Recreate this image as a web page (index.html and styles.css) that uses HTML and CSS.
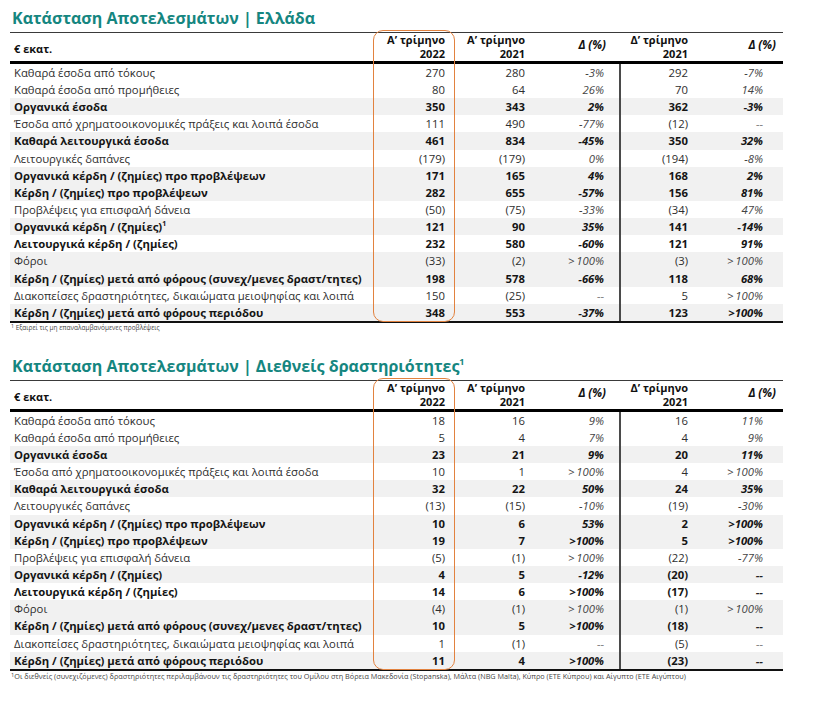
FILE: index.html
```html
<!DOCTYPE html>
<html lang="el">
<head>
<meta charset="utf-8">
<title>Κατάσταση Αποτελεσμάτων</title>
<link rel="stylesheet" href="styles.css">
</head>
<body>
<section class="block">
  <h2 class="title">Κατάσταση Αποτελεσμάτων | Ελλάδα</h2>
  <div class="table-wrap">
    <table class="fin">
      <colgroup><col class="c-label"><col class="c-a"><col class="c-b"><col class="c-c"><col class="c-d"><col class="c-e"></colgroup>
      <thead>
        <tr>
          <th class="lbl">€ εκατ.</th>
          <th class="n a">Α’ τρίμηνο<br>2022</th>
          <th class="n b">Α’ τρίμηνο<br>2021</th>
          <th class="n c pct">Δ (%)</th>
          <th class="n d">Δ’ τρίμηνο<br>2021</th>
          <th class="n e pct">Δ (%)</th>
        </tr>
      </thead>
      <tbody>
        <tr><td class="lbl">Καθαρά έσοδα από τόκους</td><td class="n a">270</td><td class="n b">280</td><td class="n c p">-3%</td><td class="n d">292</td><td class="n e p">-7%</td></tr>
        <tr><td class="lbl">Καθαρά έσοδα από προμήθειες</td><td class="n a">80</td><td class="n b">64</td><td class="n c p">26%</td><td class="n d">70</td><td class="n e p">14%</td></tr>
        <tr class="bold sh"><td class="lbl">Οργανικά έσοδα</td><td class="n a">350</td><td class="n b">343</td><td class="n c p">2%</td><td class="n d">362</td><td class="n e p">-3%</td></tr>
        <tr><td class="lbl">Έσοδα από χρηματοοικονομικές πράξεις και λοιπά έσοδα</td><td class="n a">111</td><td class="n b">490</td><td class="n c p">-77%</td><td class="n d">(12)</td><td class="n e p dash">--</td></tr>
        <tr class="bold sh"><td class="lbl">Καθαρά λειτουργικά έσοδα</td><td class="n a">461</td><td class="n b">834</td><td class="n c p">-45%</td><td class="n d">350</td><td class="n e p">32%</td></tr>
        <tr><td class="lbl">Λειτουργικές δαπάνες</td><td class="n a">(179)</td><td class="n b">(179)</td><td class="n c p">0%</td><td class="n d">(194)</td><td class="n e p">-8%</td></tr>
        <tr class="bold sh"><td class="lbl">Οργανικά κέρδη / (ζημίες) προ προβλέψεων</td><td class="n a">171</td><td class="n b">165</td><td class="n c p">4%</td><td class="n d">168</td><td class="n e p">2%</td></tr>
        <tr class="bold sh"><td class="lbl">Κέρδη / (ζημίες) προ προβλέψεων</td><td class="n a">282</td><td class="n b">655</td><td class="n c p">-57%</td><td class="n d">156</td><td class="n e p">81%</td></tr>
        <tr><td class="lbl">Προβλέψεις για επισφαλή δάνεια</td><td class="n a">(50)</td><td class="n b">(75)</td><td class="n c p">-33%</td><td class="n d">(34)</td><td class="n e p">47%</td></tr>
        <tr class="bold sh"><td class="lbl">Οργανικά κέρδη / (ζημίες)<sup>1</sup></td><td class="n a">121</td><td class="n b">90</td><td class="n c p">35%</td><td class="n d">141</td><td class="n e p">-14%</td></tr>
        <tr class="bold"><td class="lbl">Λειτουργικά κέρδη / (ζημίες)</td><td class="n a">232</td><td class="n b">580</td><td class="n c p">-60%</td><td class="n d">121</td><td class="n e p">91%</td></tr>
        <tr class="sh"><td class="lbl">Φόροι</td><td class="n a">(33)</td><td class="n b">(2)</td><td class="n c p">&gt;&#8201;100%</td><td class="n d">(3)</td><td class="n e p">&gt;&#8201;100%</td></tr>
        <tr class="bold sh"><td class="lbl">Κέρδη / (ζημίες) μετά από φόρους (συνεχ/μενες δραστ/τητες)</td><td class="n a">198</td><td class="n b">578</td><td class="n c p">-66%</td><td class="n d">118</td><td class="n e p">68%</td></tr>
        <tr><td class="lbl">Διακοπείσες δραστηριότητες, δικαιώματα μειοψηφίας και λοιπά</td><td class="n a">150</td><td class="n b">(25)</td><td class="n c p dash">--</td><td class="n d">5</td><td class="n e p">&gt;&#8201;100%</td></tr>
        <tr class="bold sh last"><td class="lbl">Κέρδη / (ζημίες) μετά από φόρους περιόδου</td><td class="n a">348</td><td class="n b">553</td><td class="n c p">-37%</td><td class="n d">123</td><td class="n e p">&gt;100%</td></tr>
      </tbody>
    </table>
    <div class="hl"></div>
  </div>
  <p class="note note-s"><sup>1</sup> Εξαιρεί τις μη επαναλαμβανόμενες προβλέψεις</p>
</section>

<section class="block block-2">
  <h2 class="title">Κατάσταση Αποτελεσμάτων | Διεθνείς δραστηριότητες<sup>1</sup></h2>
  <div class="table-wrap">
    <table class="fin">
      <colgroup><col class="c-label"><col class="c-a"><col class="c-b"><col class="c-c"><col class="c-d"><col class="c-e"></colgroup>
      <thead>
        <tr>
          <th class="lbl">€ εκατ.</th>
          <th class="n a">Α’ τρίμηνο<br>2022</th>
          <th class="n b">Α’ τρίμηνο<br>2021</th>
          <th class="n c pct">Δ (%)</th>
          <th class="n d">Δ’ τρίμηνο<br>2021</th>
          <th class="n e pct">Δ (%)</th>
        </tr>
      </thead>
      <tbody>
        <tr><td class="lbl">Καθαρά έσοδα από τόκους</td><td class="n a">18</td><td class="n b">16</td><td class="n c p">9%</td><td class="n d">16</td><td class="n e p">11%</td></tr>
        <tr><td class="lbl">Καθαρά έσοδα από προμήθειες</td><td class="n a">5</td><td class="n b">4</td><td class="n c p">7%</td><td class="n d">4</td><td class="n e p">9%</td></tr>
        <tr class="bold sh"><td class="lbl">Οργανικά έσοδα</td><td class="n a">23</td><td class="n b">21</td><td class="n c p">9%</td><td class="n d">20</td><td class="n e p">11%</td></tr>
        <tr><td class="lbl">Έσοδα από χρηματοοικονομικές πράξεις και λοιπά έσοδα</td><td class="n a">10</td><td class="n b">1</td><td class="n c p">&gt;&#8201;100%</td><td class="n d">4</td><td class="n e p">&gt;&#8201;100%</td></tr>
        <tr class="bold sh"><td class="lbl">Καθαρά λειτουργικά έσοδα</td><td class="n a">32</td><td class="n b">22</td><td class="n c p">50%</td><td class="n d">24</td><td class="n e p">35%</td></tr>
        <tr><td class="lbl">Λειτουργικές δαπάνες</td><td class="n a">(13)</td><td class="n b">(15)</td><td class="n c p">-10%</td><td class="n d">(19)</td><td class="n e p">-30%</td></tr>
        <tr class="bold sh"><td class="lbl">Οργανικά κέρδη / (ζημίες) προ προβλέψεων</td><td class="n a">10</td><td class="n b">6</td><td class="n c p">53%</td><td class="n d">2</td><td class="n e p">&gt;100%</td></tr>
        <tr class="bold sh"><td class="lbl">Κέρδη / (ζημίες) προ προβλέψεων</td><td class="n a">19</td><td class="n b">7</td><td class="n c p">&gt;100%</td><td class="n d">5</td><td class="n e p">&gt;100%</td></tr>
        <tr><td class="lbl">Προβλέψεις για επισφαλή δάνεια</td><td class="n a">(5)</td><td class="n b">(1)</td><td class="n c p">&gt;&#8201;100%</td><td class="n d">(22)</td><td class="n e p">-77%</td></tr>
        <tr class="bold sh"><td class="lbl">Οργανικά κέρδη / (ζημίες)</td><td class="n a">4</td><td class="n b">5</td><td class="n c p">-12%</td><td class="n d">(20)</td><td class="n e p dash">--</td></tr>
        <tr class="bold"><td class="lbl">Λειτουργικά κέρδη / (ζημίες)</td><td class="n a">14</td><td class="n b">6</td><td class="n c p">&gt;100%</td><td class="n d">(17)</td><td class="n e p dash">--</td></tr>
        <tr class="sh"><td class="lbl">Φόροι</td><td class="n a">(4)</td><td class="n b">(1)</td><td class="n c p">&gt;&#8201;100%</td><td class="n d">(1)</td><td class="n e p">&gt;&#8201;100%</td></tr>
        <tr class="bold sh"><td class="lbl">Κέρδη / (ζημίες) μετά από φόρους (συνεχ/μενες δραστ/τητες)</td><td class="n a">10</td><td class="n b">5</td><td class="n c p">&gt;100%</td><td class="n d">(18)</td><td class="n e p dash">--</td></tr>
        <tr><td class="lbl">Διακοπείσες δραστηριότητες, δικαιώματα μειοψηφίας και λοιπά</td><td class="n a">1</td><td class="n b">(1)</td><td class="n c p dash">--</td><td class="n d">(5)</td><td class="n e p dash">--</td></tr>
        <tr class="bold sh last"><td class="lbl">Κέρδη / (ζημίες) μετά από φόρους περιόδου</td><td class="n a">11</td><td class="n b">4</td><td class="n c p">&gt;100%</td><td class="n d">(23)</td><td class="n e p dash">--</td></tr>
      </tbody>
    </table>
    <div class="hl"></div>
  </div>
  <p class="note note-l"><sup>1</sup>Οι διεθνείς (συνεχιζόμενες) δραστηριότητες περιλαμβάνουν τις δραστηριότητες του Ομίλου στη Βόρεια Μακεδονία (Stopanska), Μάλτα (NBG Malta), Κύπρο (ΕΤΕ Κύπρου) και Αίγυπτο (ΕΤΕ Αιγύπτου)</p>
</section>
</body>
</html>
```

FILE: styles.css
```css
* { box-sizing: border-box; }

html, body {
  margin: 0;
  padding: 0;
  background: #ffffff;
}

body {
  font-family: "Open Sans", "Noto Sans", "DejaVu Sans", sans-serif;
  color: #222;
  padding-top: 8px;
}

.block {
  padding-left: 10px;
}

.block-2 {
  margin-top: 24px;
}

.title {
  margin: 0 0 4px 2px;
  font-size: 16px;
  line-height: 20px;
  font-weight: 700;
  color: #158680;
  white-space: nowrap;
}

.title sup {
  font-size: 9px;
  line-height: 0;
  vertical-align: 7px;
}

.table-wrap {
  position: relative;
  width: 773px;
}

.fin {
  width: 773px;
  table-layout: fixed;
  border-collapse: collapse;
  border-top: 1px solid #3a3a3a;
  font-size: 11.3px;
}

.c-label { width: 363px; }
.c-a { width: 82px; }
.c-b { width: 80px; }
.c-c { width: 85px; }
.c-d { width: 78px; }
.c-e { width: 85px; }

.fin th {
  height: 29px;
  padding: 0;
  font-weight: 700;
  color: #111;
  line-height: 14px;
  vertical-align: top;
  border-bottom: 3px solid #000;
  white-space: nowrap;
  font-size: 11px;
}

.fin th.lbl {
  text-align: left;
  padding-left: 4px;
  padding-top: 9px;
}

.fin th.pct {
  font-style: italic;
  font-size: 11.5px;
  padding-top: 5px;
}

.fin td {
  height: 17.15px;
  padding: 0;
  line-height: 17px;
  white-space: nowrap;
  color: #2e2e2e;
}

.fin td.lbl {
  padding-left: 4px;
  text-align: left;
}

.fin .n { text-align: right; }
.fin .a { padding-right: 10px; }
.fin .b { padding-right: 10px; }
.fin .c { padding-right: 15px; }
.fin .d { padding-right: 10px; }
.fin .e { padding-right: 20px; }
.fin th.e { padding-right: 7px; }
.fin th.c { padding-right: 14px; }

.fin td.d {
  border-left: 2px solid #4a4a4a;
}

.fin td.p {
  font-style: italic;
  color: #444;
}

.fin td.dash {
  color: #888;
}

.fin tr.bold td {
  font-weight: 700;
  color: #151515;
}

.fin tr.bold td.dash {
  color: #222;
}

.fin tr.sh td {
  background: #f1f1f1;
}

.fin tr.last td {
  border-bottom: 2px solid #111;
}

.fin sup {
  font-size: 7px;
  line-height: 0;
  vertical-align: 5px;
}

.hl {
  position: absolute;
  left: 363px;
  top: -2px;
  width: 82px;
  bottom: 1px;
  border: 1.5px solid #e2823f;
  border-radius: 10px;
  pointer-events: none;
}

.note {
  margin: 1px 0 0 1px;
  color: #444;
  white-space: nowrap;
}

.note-s {
  font-size: 6.5px;
  line-height: 8px;
}

.note-l {
  font-size: 7.25px;
  line-height: 9px;
}

.note sup {
  font-size: 0.8em;
  line-height: 0;
  vertical-align: 0.4em;
}
```
